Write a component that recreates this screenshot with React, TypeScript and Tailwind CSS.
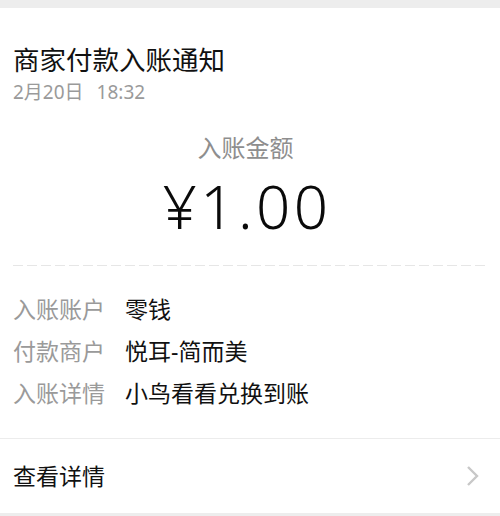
import React from "react";

const rows = [
  { label: "入账账户", value: "零钱" },
  { label: "付款商户", value: "悦耳-简而美" },
  { label: "入账详情", value: "小鸟看看兑换到账" },
];

export default function App() {
  return (
    <div
      className="w-[500px] h-[516px] overflow-hidden flex flex-col bg-white"
      style={{ fontFamily: '"Noto Sans", "Noto Sans CJK SC", sans-serif' }}
    >
      {/* top strip */}
      <div className="h-2 bg-[#ededed] flex-shrink-0" />

      {/* card */}
      <div className="px-[13px] pt-[34px]">
        <div className="text-[26.5px] leading-[36px] text-[#111]">商家付款入账通知</div>
        <div className="text-[19px] leading-[28px] text-[#9a9a9a]">
          2月20日<span className="ml-[13px]">18:32</span>
        </div>

        <div className="mt-[27px] pr-[9px] text-center text-[24px] leading-[30px] text-[#8e8e8e]">入账金额</div>
        <div className="mt-[7px] pr-[6px] text-center text-[60px] leading-[72px] font-light tracking-[3.5px] text-[#0a0a0a]">
          ¥1.00
        </div>

        <div className="mt-[23px] h-px bg-[repeating-linear-gradient(90deg,#e6e6e6_0_10px,transparent_10px_14px)]" />

        <div className="mt-[22px] flex flex-col">
          {rows.map((r) => (
            <div key={r.label} className="flex items-center h-[42px] text-[23px]">
              <span className="w-[112px] text-[#9a9a9a]">{r.label}</span>
              <span className="text-[#111]">{r.value}</span>
            </div>
          ))}
        </div>
      </div>

      {/* detail link */}
      <div className="mt-[24px] border-t border-[#ececec] flex-1 flex flex-col">
        <div className="flex-1 flex items-center justify-between px-[13px]">
          <span className="text-[23px] text-[#111]">查看详情</span>
          <svg width="14" height="22" viewBox="0 0 14 22" className="mr-[7px]">
            <path d="M2 2 L11 11 L2 20" fill="none" stroke="#c8c8c8" strokeWidth="2.4" />
          </svg>
        </div>
        <div className="h-[3px] bg-[#ededed]" />
      </div>
    </div>
  );
}
